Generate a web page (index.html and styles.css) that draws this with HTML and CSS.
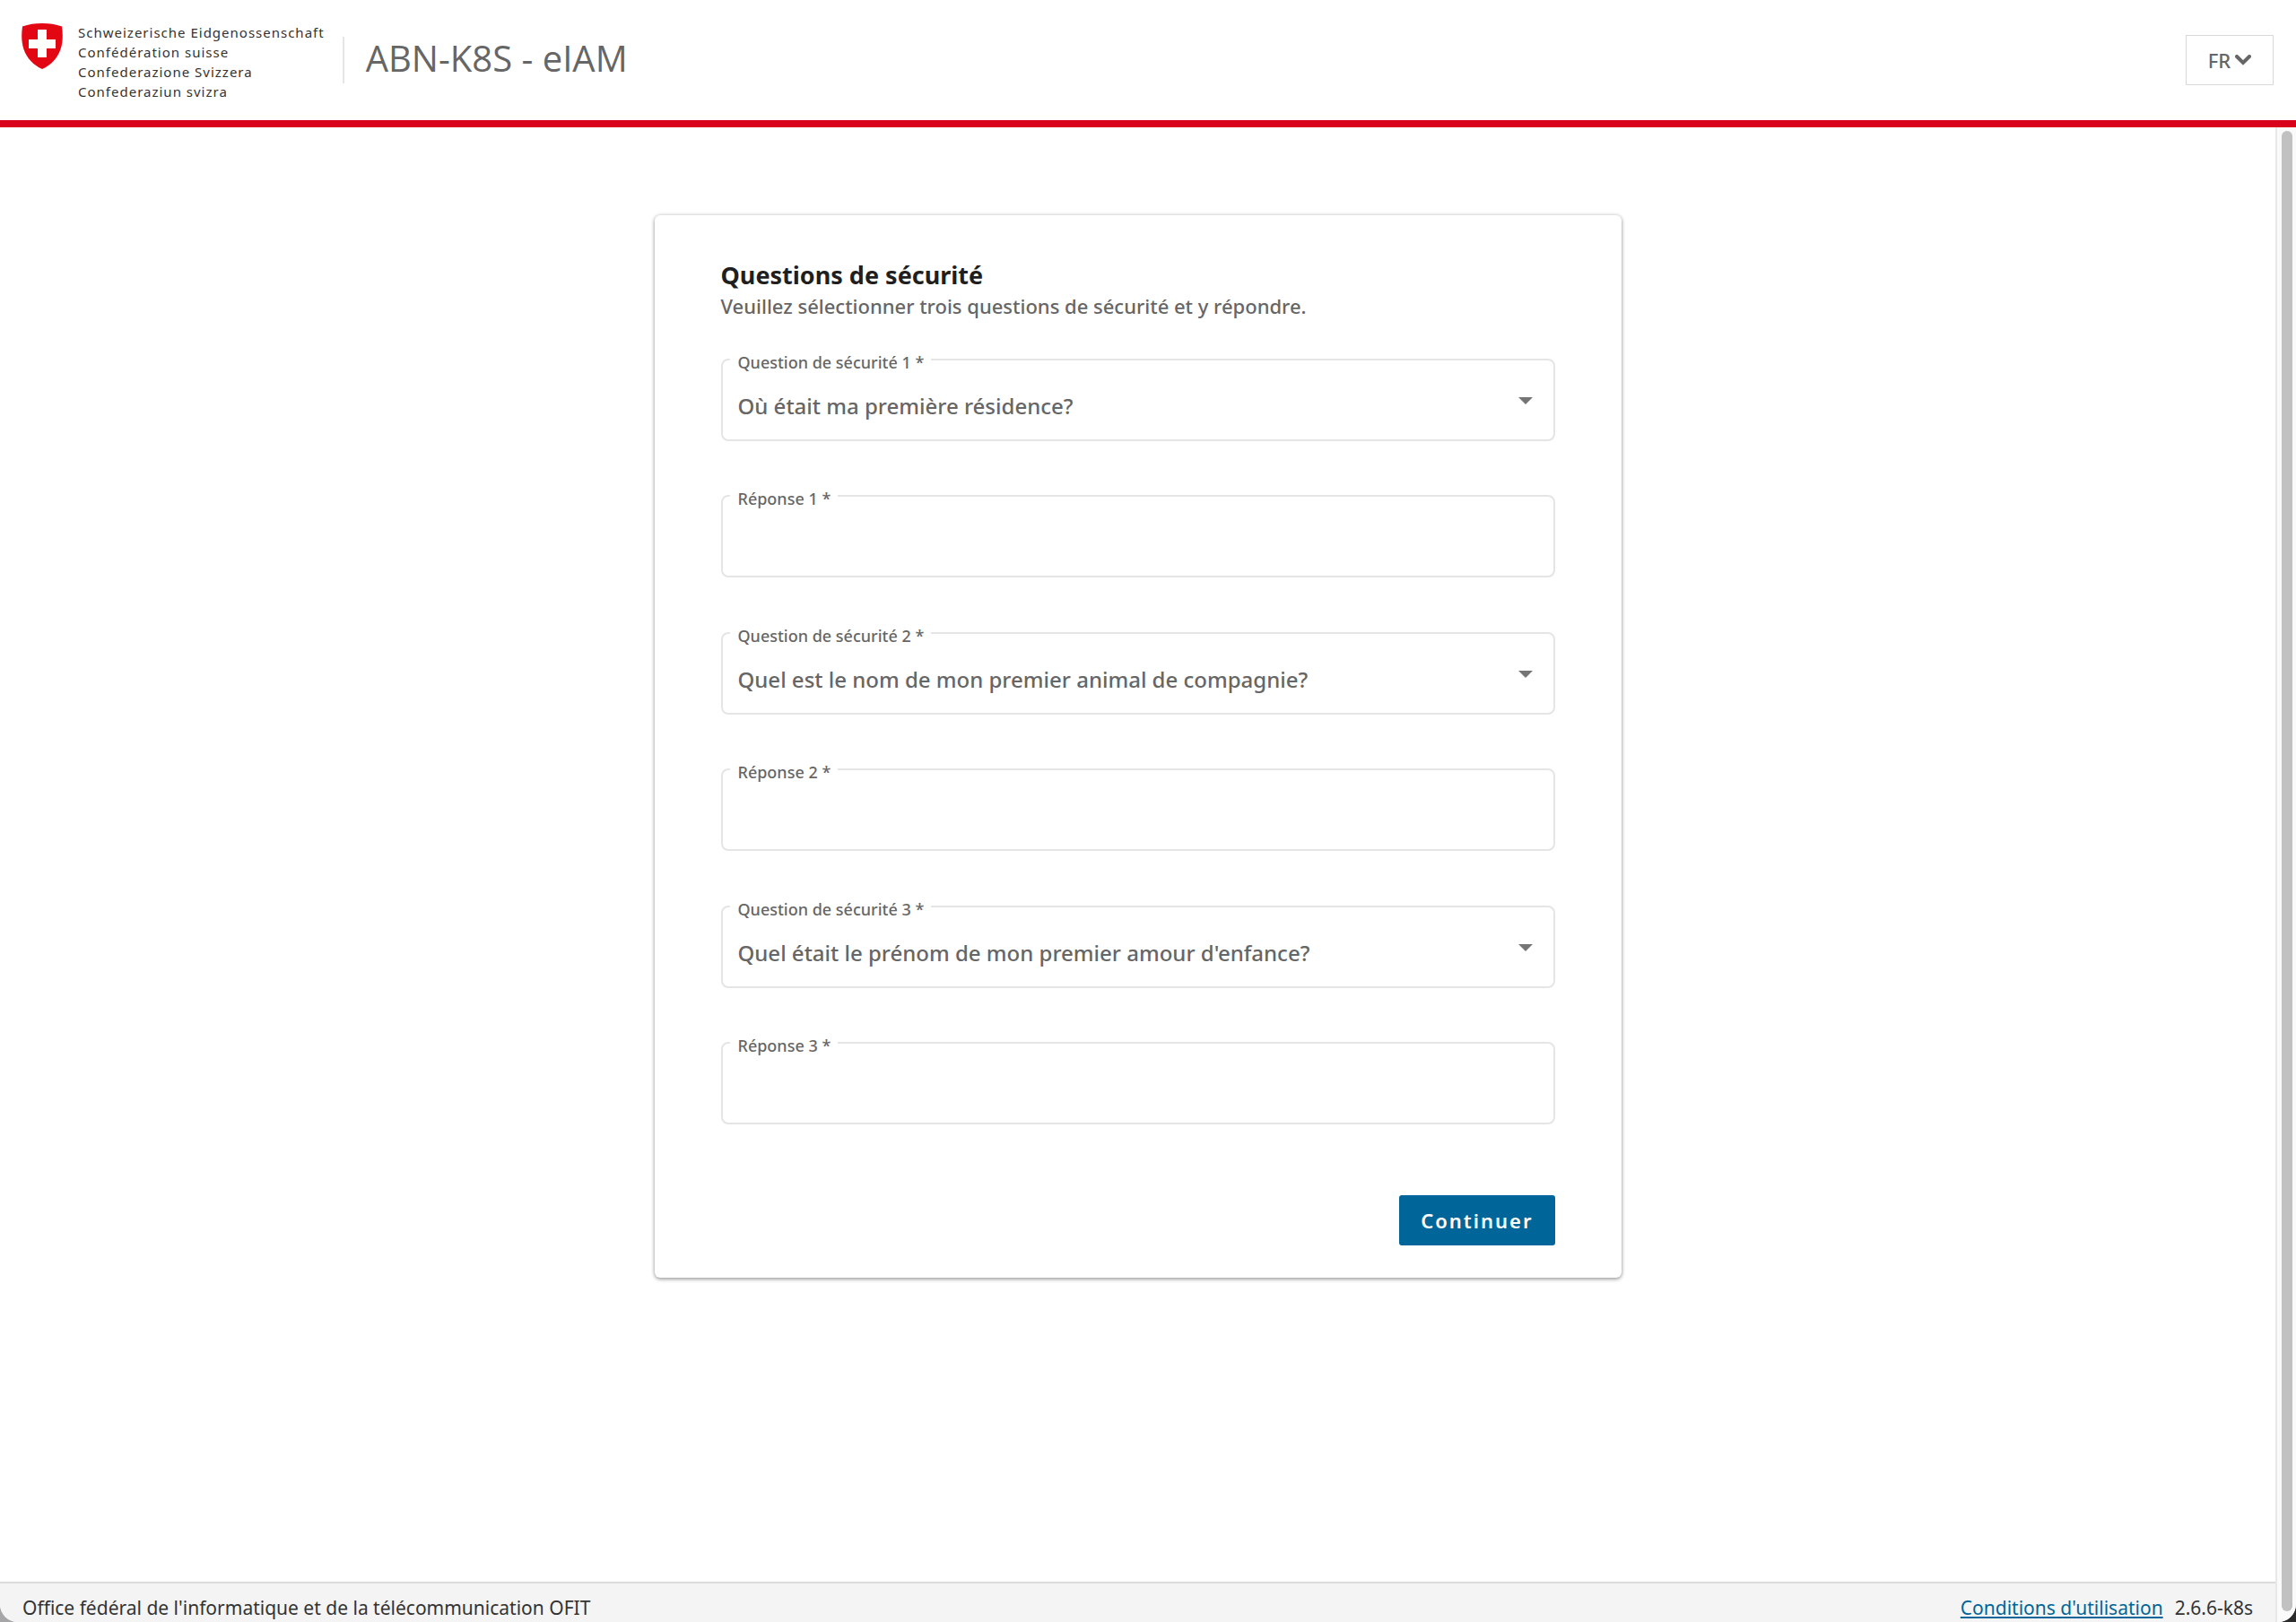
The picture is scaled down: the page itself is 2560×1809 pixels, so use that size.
FILE: index.html
```html
<!DOCTYPE html>
<html lang="fr">
<head>
<meta charset="utf-8">
<meta name="viewport" content="width=device-width, initial-scale=1">
<title>ABN-K8S - eIAM</title>
<link rel="stylesheet" href="styles.css">
</head>
<body>
<div class="app">
  <header class="header">
    <svg class="shield" viewBox="0 0 46 51" aria-hidden="true">
      <path fill="#e30613" d="M1 3.500C8 1 15 0 23 0s15 1 22 3.500C46 11 46.500 20 43.500 29 40 39 33 46.500 23 51 13 46.500 6 39 2.500 29-.5 20 0 11 1 3.500z"/>
      <path fill="#fff" d="M18 7h10v11h10v10H28v10H18V28H8V18h10z"/>
    </svg>
    <p class="confederation">Schweizerische Eidgenossenschaft<br>Confédération suisse<br>Confederazione Svizzera<br>Confederaziun svizra</p>
    <h1 class="app-title">ABN-K8S - eIAM</h1>
    <button class="language" type="button">FR
      <svg class="chevron" viewBox="0 0 18 12" aria-hidden="true"><path d="M2 2l7 7 7-7" fill="none" stroke="currentColor" stroke-width="4" stroke-linecap="round"/></svg>
    </button>
  </header>
  <div class="viewport">
    <div class="page">
      <main class="main">
        <form class="card">
          <h2 class="card-title">Questions de sécurité</h2>
          <p class="card-intro">Veuillez sélectionner trois questions de sécurité et y répondre.</p>
          <div class="groups">
            <div class="group">
              <div class="field">
                <label class="field-label" for="q1">Question de sécurité 1 *</label>
                <select class="control" id="q1"><option>Où était ma première résidence?</option></select>
                <svg class="arrow" viewBox="0 0 14 7" aria-hidden="true"><path fill="currentColor" d="M0 0h14L7 7z"/></svg>
              </div>
              <div class="field">
                <label class="field-label" for="r1">Réponse 1 *</label>
                <input class="control" id="r1" type="text">
              </div>
            </div>
            <div class="group">
              <div class="field">
                <label class="field-label" for="q2">Question de sécurité 2 *</label>
                <select class="control" id="q2"><option>Quel est le nom de mon premier animal de compagnie?</option></select>
                <svg class="arrow" viewBox="0 0 14 7" aria-hidden="true"><path fill="currentColor" d="M0 0h14L7 7z"/></svg>
              </div>
              <div class="field">
                <label class="field-label" for="r2">Réponse 2 *</label>
                <input class="control" id="r2" type="text">
              </div>
            </div>
            <div class="group">
              <div class="field">
                <label class="field-label" for="q3">Question de sécurité 3 *</label>
                <select class="control" id="q3"><option>Quel était le prénom de mon premier amour d'enfance?</option></select>
                <svg class="arrow" viewBox="0 0 14 7" aria-hidden="true"><path fill="currentColor" d="M0 0h14L7 7z"/></svg>
              </div>
              <div class="field">
                <label class="field-label" for="r3">Réponse 3 *</label>
                <input class="control" id="r3" type="text">
              </div>
            </div>
          </div>
          <div class="actions"><button class="submit" type="submit">Continuer</button></div>
        </form>
      </main>
      <footer class="footer">
        <span>Office fédéral de l'informatique et de la télécommunication OFIT</span>
        <span class="footer-end"><a class="terms" href="#">Conditions d'utilisation</a><span>2.6.6-k8s</span></span>
      </footer>
    </div>
    <div class="scrollbar" aria-hidden="true"><div class="thumb"></div></div>
  </div>
</div>
</body>
</html>
```
FILE: styles.css
```css
* { box-sizing: border-box; }

html { background: linear-gradient(90deg, #a6a6a8 50%, #2b2b2b 50%); }

body {
  margin: 0;
  font-family: "Noto Sans", "Open Sans", sans-serif;
  font-size: 22px;
  font-weight: 500;
  color: #333;
}

h1, h2, p { margin: 0; }

button, input, select {
  font-family: inherit;
  font-weight: inherit;
}

.app {
  display: flex;
  flex-direction: column;
  min-height: 100vh;
  background: #fff;
  border-radius: 0 0 20px 20px;
  overflow: hidden;
}

.header {
  display: flex;
  align-items: center;
  padding: 21px 25px 21px 24px;
  border-bottom: 8px solid #d8001b;
}

.shield {
  align-self: flex-start;
  width: 46px;
  height: 51px;
  margin-top: 5px;
}

.confederation {
  margin-left: 17px;
  padding-top: 4px;
  font-size: 15px;
  font-weight: 400;
  line-height: 22px;
  letter-spacing: 1px;
}

.app-title {
  margin-left: 20px;
  padding: 0 0 4px 24px;
  border-left: 2px solid #e5e5e5;
  font-family: "Open Sans", sans-serif;
  font-size: 40px;
  font-weight: 400;
  line-height: 48px;
  color: #666;
}

.language {
  display: flex;
  align-items: center;
  justify-content: center;
  gap: 5px;
  width: 98px;
  height: 56px;
  margin-left: auto;
  padding: 0;
  border: 1px solid #d9d9d9;
  background: #fff;
  font-size: 22px;
  color: #666;
}

.chevron { width: 18px; height: 12px; }

.viewport { display: flex; flex: 1; }

.page { display: flex; flex: 1; flex-direction: column; }

.main { flex: 1; padding: 98px 24px; }

.card {
  width: 100%;
  max-width: 1078px;
  margin: 0 auto;
  padding: 48px 74px 36px;
  border-radius: 6px;
  box-shadow: 0 2px 4px rgba(0, 0, 0, .3), 0 0 4px rgba(0, 0, 0, .2);
}

.card-title {
  font-size: 27px;
  font-weight: 700;
  line-height: 38px;
  color: #1f1f1f;
}

.card-intro {
  line-height: 30px;
  color: #666;
}

.groups {
  display: flex;
  flex-direction: column;
  gap: 61px;
  margin-top: 44px;
}

.group {
  display: flex;
  flex-direction: column;
  gap: 60px;
}

.field { position: relative; display: flex; }

.field-label {
  position: absolute;
  top: -9px;
  left: 10px;
  padding: 0 8px 0 9px;
  background: #fff;
  font-size: 18px;
  line-height: 26px;
  color: #666;
}

.control {
  width: 100%;
  height: 92px;
  padding: 13px 72px 0 17px;
  border: 2px solid #e5e5e5;
  border-radius: 8px;
  background: #fff;
  appearance: none;
  font-size: 24px;
  color: #666;
}

.arrow {
  position: absolute;
  top: 43px;
  right: 25px;
  width: 16px;
  height: 8px;
  color: #757575;
  pointer-events: none;
}

.actions {
  display: flex;
  justify-content: flex-end;
  margin-top: 79px;
}

.submit {
  height: 56px;
  padding: 0 24px;
  border: 0;
  border-radius: 3px;
  background: #006699;
  font-size: 22px;
  font-weight: 600;
  letter-spacing: 2px;
  color: #fff;
}

.footer {
  display: flex;
  justify-content: space-between;
  padding: 11px 25px 0;
  border-top: 2px solid #dcdcdc;
  background: #f4f4f4;
  font-size: 21px;
  font-weight: 400;
  line-height: 32px;
}

.footer-end { display: flex; gap: 13px; }

.terms { color: #006699; }

.scrollbar {
  display: flex;
  justify-content: center;
  width: 23px;
  padding: 4px 0 12px;
  border-left: 2px solid #e8e8e8;
  background: #fafafa;
}

.thumb {
  width: 12px;
  border-radius: 6px;
  background: #c1c1c1;
}
```
